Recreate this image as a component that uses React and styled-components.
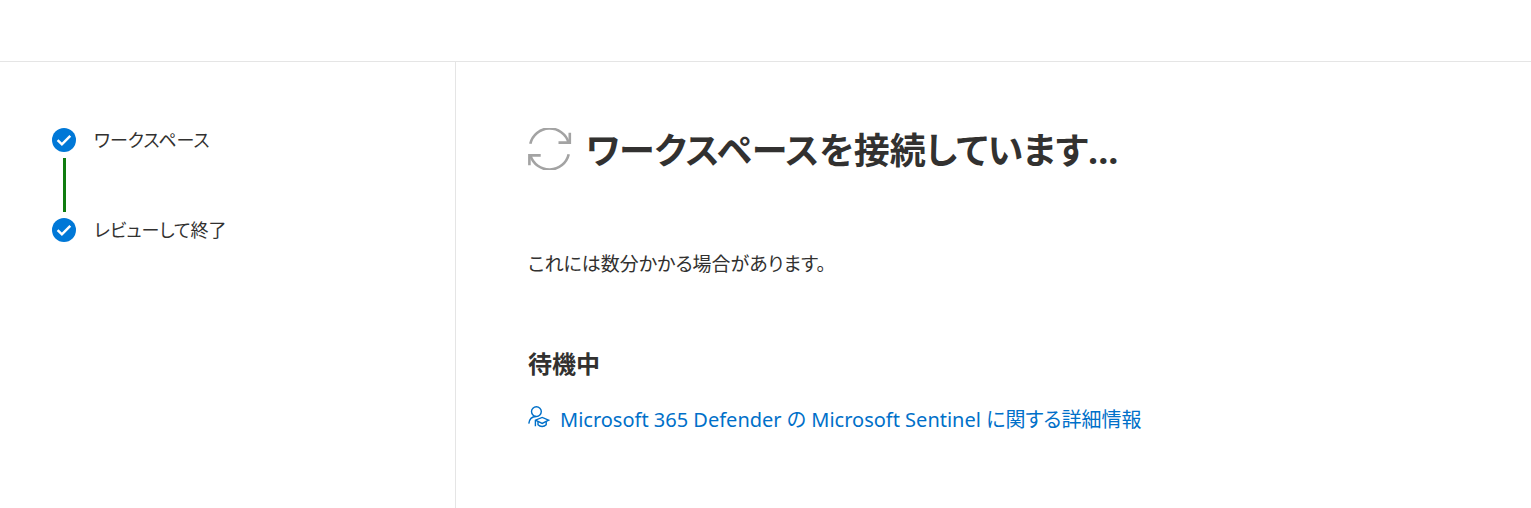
import styled, { createGlobalStyle } from 'styled-components';

const steps = ['ワークスペース', 'レビューして終了'];

export default function App() {
  return (
    <>
      <GlobalStyle />
      <StyledPage>
        <StyledTopBar />
        <StyledBody>
          <StepsNav />
          <Content />
        </StyledBody>
      </StyledPage>
    </>
  );
}

const StepsNav = () => (
  <StyledNav>
    <StyledSteps>
      {steps.map((step) => (
        <StyledStep key={step}>
          <CheckIcon />
          <span>{step}</span>
        </StyledStep>
      ))}
    </StyledSteps>
  </StyledNav>
);

const Content = () => (
  <StyledContent>
    <StyledTitle>
      <SyncIcon />
      <h1>ワークスペースを接続しています...</h1>
    </StyledTitle>
    <StyledText>これには数分かかる場合があります。</StyledText>
    <StyledSubtitle>待機中</StyledSubtitle>
    <StyledLink href='#'>
      <LearnIcon />
      <span>Microsoft 365 Defender の Microsoft Sentinel に関する詳細情報</span>
    </StyledLink>
  </StyledContent>
);

const CheckIcon = () => (
  <svg width='24' height='24' viewBox='0 0 24 24' aria-hidden='true'>
    <circle cx='12' cy='12' r='12' fill='#0078d7' />
    <path d='M5.6 12.2 9.9 16.3 18.3 7.8' fill='none' stroke='#fff' strokeWidth='2.5' />
  </svg>
);

const SyncIcon = () => (
  <svg width='44' height='42' viewBox='0 0 44 42' aria-hidden='true'>
    <g fill='none' stroke='#a3a3a3' strokeWidth='2.6'>
      <path d='M2.3 15.8A19.8 19.7 0 0 1 40.6 14.6' />
      <path d='M41.8 4.8V14.6H30.5' />
      <path d='M40.7 26.2A19.8 19.7 0 0 1 2.4 27.4' />
      <path d='M1.4 37.2V27.4H12.7' />
    </g>
  </svg>
);

const LearnIcon = () => (
  <svg width='22' height='22' viewBox='0 0 22 22' aria-hidden='true'>
    <g fill='none' stroke='#0070c9' strokeWidth='1.4'>
      <circle cx='8.4' cy='5.6' r='4.9' />
      <path d='M0.8 17.6C1.2 13.8 3.6 10.7 8 10.5' />
      <path d='M7.4 20.2V14.2L14.2 11.4 20.6 14.2 14.2 17.4 7.4 14.2' />
      <path d='M10 15.6V18.8C12.2 21 16 21 18.2 18.8V15.6' />
    </g>
  </svg>
);

const GlobalStyle = createGlobalStyle`
  * {
    box-sizing: border-box;
  }

  body {
    margin: 0;
    background: #fff;
    color: #323130;
    font-family: 'Noto Sans', 'Noto Sans CJK JP', sans-serif;
    font-size: 18px;
    line-height: 28px;
  }

  h1,
  h2,
  p,
  ol {
    margin: 0;
    padding: 0;
  }
`;

const StyledPage = styled.div`
  display: flex;
  flex-direction: column;
  min-height: 100vh;
  font-feature-settings: 'palt';
`;

const StyledTopBar = styled.header`
  height: 62px;
  border-bottom: 1px solid #e5e5e5;
`;

const StyledBody = styled.div`
  display: flex;
  flex: 1;
`;

const StyledNav = styled.nav`
  flex: 0 0 456px;
  padding: 66px 52px;
  border-right: 1px solid #e5e5e5;
`;

const StyledSteps = styled.ol`
  list-style: none;
`;

const StyledStep = styled.li`
  display: grid;
  grid-template-columns: 24px 1fr;
  align-items: center;
  column-gap: 18px;

  svg {
    grid-column: 1;
  }

  span {
    line-height: 24px;
  }

  /* connector to the previous step */
  & + &::before {
    content: '';
    grid-column: 1 / -1;
    width: 3px;
    height: 54px;
    margin: 6px 0 6px 11px;
    background: #107c10;
  }
`;

const StyledContent = styled.main`
  flex: 1;
  padding: 62px 72px;
`;

const StyledTitle = styled.div`
  display: flex;
  align-items: flex-start;
  gap: 14px;

  svg {
    flex: none;
    margin-top: 4px;
  }

  h1 {
    font-size: 36px;
    font-weight: 700;
    line-height: 54px;
  }
`;

const StyledText = styled.p`
  margin-top: 72px;
  font-size: 19px;
`;

const StyledSubtitle = styled.h2`
  margin-top: 70px;
  font-size: 24px;
  font-weight: 700;
  line-height: 32px;
`;

const StyledLink = styled.a`
  display: inline-flex;
  align-items: flex-start;
  gap: 10px;
  margin-top: 26px;
  color: #0070c9;
  font-size: 20px;
  text-decoration: none;

  svg {
    flex: none;
  }
`;
